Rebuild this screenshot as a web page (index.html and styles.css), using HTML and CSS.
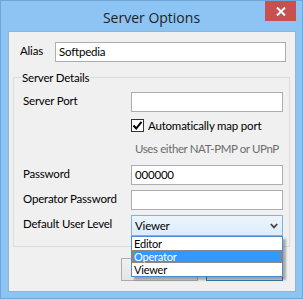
FILE: index.html
```html
<!DOCTYPE html>
<html>
  <head>
    <title>Server Options</title>
    <meta charset="UTF-8">
    <link rel="stylesheet" href="styles.css">
  </head>
  <body>
    <div class="window">
      <div class="titlebar">
        <span class="title">Server Options</span>
        <div class="close-btn">
          <svg width="10" height="9" viewBox="0 0 10 9"><path d="M1 0.5 L9 8.5 M9 0.5 L1 8.5" stroke="#fff" stroke-width="2"/></svg>
        </div>
      </div>
      <div class="client">
        <div class="alias-row">
          <label class="lbl">Alias</label>
          <div class="textbox">Softpedia</div>
        </div>

        <fieldset class="group">
          <legend>Server Details</legend>
          <div class="form-grid">
            <label class="lbl">Server Port</label>
            <div class="textbox"></div>

            <span></span>
            <div class="check-row">
              <span class="checkbox">
                <svg width="11" height="11" viewBox="0 0 11 11"><path d="M1.5 5.5 L4.2 8.5 L9.5 1.8" fill="none" stroke="#000" stroke-width="2"/></svg>
              </span>
              <span>Automatically map port</span>
            </div>

            <span></span>
            <div class="hint">Uses either NAT-PMP or UPnP</div>

            <label class="lbl">Password</label>
            <div class="textbox">000000</div>

            <label class="lbl">Operator Password</label>
            <div class="textbox"></div>

            <label class="lbl">Default User Level</label>
            <div class="combo-wrap">
              <div class="combo">
                <span>Viewer</span>
                <svg width="8" height="6" viewBox="0 0 8 6"><path d="M0.8 1 L4 4.4 L7.2 1" fill="none" stroke="#444" stroke-width="1.8"/></svg>
              </div>
              <ul class="dropdown">
                <li>Editor</li>
                <li class="selected">Operator</li>
                <li>Viewer</li>
              </ul>
            </div>
          </div>
        </fieldset>

        <div class="buttons">
          <button class="btn"></button>
          <button class="btn btn-default"></button>
        </div>
      </div>
    </div>
  </body>
</html>
```

FILE: styles.css
```css
body {
	margin: 0;
	font-family: Lato, "Open Sans", sans-serif;
	font-size: 11.5px;
	letter-spacing: -0.2px;
	color: #000;
}

.window {
	width: 303px;
	height: 299px;
	box-sizing: border-box;
	border: 1px solid #6fa6da;
	background: #8cc4f4;
	display: flex;
	flex-direction: column;
	position: relative;
}

.titlebar {
	height: 30px;
	display: flex;
	align-items: center;
	justify-content: center;
}

.title {
	font-family: "Open Sans", sans-serif;
	font-size: 14px;
	letter-spacing: 0;
	color: #222;
	margin-top: 2px;
}

.close-btn {
	position: absolute;
	top: 0;
	right: 6px;
	width: 31px;
	height: 20px;
	background: #c75050;
	display: flex;
	align-items: center;
	justify-content: center;
}

.client {
	margin-left: 7px;
	width: 288px;
	height: 261px;
	box-sizing: border-box;
	border: 1px solid #9ab3cc;
	background: #f0f0f0;
}

.alias-row {
	display: grid;
	grid-template-columns: 35px 231px;
	margin-top: 10px;
	padding-left: 11px;
	align-items: start;
}

.lbl {
	line-height: 16px;
	padding-top: 1px;
	white-space: nowrap;
}

.textbox {
	height: 20px;
	box-sizing: border-box;
	border: 1px solid #abadb3;
	background: #fff;
	padding: 0 3px;
	line-height: 18px;
}

.group {
	margin: 8px 0 0 4px;
	width: 277px;
	box-sizing: border-box;
	border: 1px solid #dcdcdc;
	padding: 0 0 10px 9px;
}

.group legend {
	margin-left: -2px;
	padding: 0 1px;
	line-height: 15px;
}

.form-grid {
	display: grid;
	grid-template-columns: 108px 152px;
	margin-top: 7px;
	align-items: start;
}

.form-grid .textbox {
	margin-bottom: 5px;
}

.check-row {
	display: flex;
	align-items: center;
	gap: 4px;
	margin-top: 2px;
	height: 13px;
	white-space: nowrap;
}

.checkbox {
	width: 13px;
	height: 13px;
	box-sizing: border-box;
	border: 1px solid #333;
	background: #fff;
	display: flex;
	align-items: center;
	justify-content: center;
}

.hint {
	color: #6d6d6d;
	padding-left: 4px;
	margin-top: 9px;
	height: 24px;
	line-height: 16px;
	white-space: nowrap;
	letter-spacing: -0.4px;
}

.combo-wrap {
	position: relative;
}

.combo {
	height: 21px;
	box-sizing: border-box;
	border: 1px solid #7eb4ea;
	background: linear-gradient(#ecf4fc, #dcecfc);
	display: flex;
	align-items: center;
	justify-content: space-between;
	padding: 0 4px 0 3px;
}

.dropdown {
	position: absolute;
	top: 21px;
	left: 0;
	width: 152px;
	box-sizing: border-box;
	margin: 0;
	padding: 0;
	list-style: none;
	background: #fff;
	border: 1px solid #4a8ad0;
	box-shadow: 3px 3px 2px rgba(0, 0, 0, 0.3);
	z-index: 2;
}

.dropdown li {
	height: 13px;
	line-height: 13px;
	font-size: 11px;
	padding-left: 2px;
	box-sizing: border-box;
	overflow: hidden;
}

.dropdown li.selected {
	background: #3399ff;
	color: #fff;
	outline: 1px dotted #e07a10;
	outline-offset: -1px;
}

.buttons {
	display: flex;
	gap: 8px;
	margin: 11px 0 0 112px;
}

.btn {
	width: 77px;
	height: 23px;
	border: 1px solid #acacac;
	background: linear-gradient(#f0f0f0, #e5e5e5);
	padding: 0;
}

.btn-default {
	border-color: #3c7fb1;
}
```
